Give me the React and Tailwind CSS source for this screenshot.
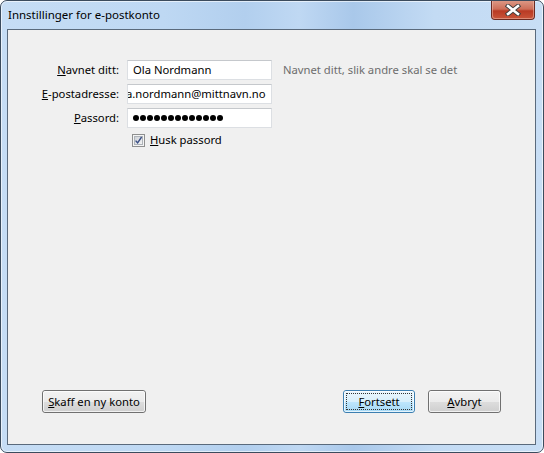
import React from "react";

const font = { fontFamily: '"Noto Sans", "Open Sans", sans-serif' };

function WinButton({ children, def, className = "" }) {
  return (
    <div
      className={
        "relative h-[23px] rounded-[3px] border flex items-center justify-center text-[11.25px] text-black " +
        (def
          ? "border-[#3c7fb1] bg-[linear-gradient(180deg,#eaf6fd_0%,#d9f0fc_50%,#bee6fd_51%,#a7d9f5_100%)] "
          : "border-[#707070] bg-[linear-gradient(180deg,#f2f2f2_0%,#ebebeb_50%,#dddddd_51%,#cfcfcf_100%)] ") +
        className
      }
    >
      <div className="absolute inset-0 rounded-[2px] border border-white/70 pointer-events-none" />
      {def && (
        <div className="absolute inset-[2px] border border-dotted border-[#333] pointer-events-none" />
      )}
      <span className="relative leading-none">{children}</span>
    </div>
  );
}

function Checkbox() {
  return (
    <svg width="13" height="13" viewBox="0 0 13 13">
      <rect x="0.5" y="0.5" width="12" height="12" fill="#f4f4f4" stroke="#8e8f8f" />
      <defs>
        <linearGradient id="cb" x1="0" y1="0" x2="1" y2="1">
          <stop offset="0" stopColor="#cbcfd5" />
          <stop offset="1" stopColor="#f6f6f6" />
        </linearGradient>
      </defs>
      <rect x="2.5" y="2.5" width="8" height="8" fill="url(#cb)" stroke="#aeb3b9" />
      <path d="M3.6 6.6 L5.6 8.8 L9.6 3" fill="none" stroke="#3a4f86" strokeWidth="1.4" />
    </svg>
  );
}

function CloseButton() {
  return (
    <div className="relative w-[44px] h-[19px] rounded-b-[4px] border border-t-0 border-[#6b2a22] bg-[linear-gradient(180deg,#dc9784_0%,#cd6e58_45%,#b93a24_55%,#c9553a_100%)] flex items-center justify-center">
      <div className="absolute inset-0 rounded-b-[3px] border border-t-0 border-[#f1c3b6]/50 pointer-events-none" />
      <svg width="16" height="12" viewBox="0 0 16 12" className="relative">
        <path d="M3 2 L13 10 M13 2 L3 10" stroke="#3d3d3d" strokeWidth="4.4" strokeLinecap="square" />
        <path d="M3 2 L13 10 M13 2 L3 10" stroke="#ffffff" strokeWidth="2.6" strokeLinecap="square" />
      </svg>
    </div>
  );
}

export default function App() {
  return (
    <div className="w-[544px] h-[453px] bg-white" style={font}>
      <div className="relative w-full h-full rounded-[7px] border border-[#3b4b5d] flex flex-col overflow-hidden bg-[linear-gradient(90deg,#c6ddf5_0%,#bed8f3_30%,#b2cfee_45%,#bfd8f3_55%,#a9c8ea_65%,#c3dbf4_80%,#c8def5_100%)]">
        <div className="absolute inset-0 rounded-[6px] border border-white/60 pointer-events-none" />
        <div className="relative h-[28px] flex items-start">
          <div className="flex-1 h-full flex items-center pl-[7px] pb-[1px] text-[11.5px] text-black">
            Innstillinger for e-postkonto
          </div>
          <div className="mr-[8px]">
            <CloseButton />
          </div>
        </div>
        <div className="relative ml-[6px] mr-[7px] mb-[7px] flex-1 border border-[#5a6a7c] bg-[#f0f0f0] flex flex-col text-[11.25px] text-black">
          <div className="mt-[30px] grid grid-cols-[111px_145px_1fr] gap-x-[8px] gap-y-[4px] items-center">
            <div className="text-right">
              <u>N</u>avnet ditt:
            </div>
            <div className="h-[20px] border border-[#dcdfe3] border-t-[#c5c8cc] bg-white flex items-center pl-[5px] whitespace-nowrap overflow-hidden">
              Ola Nordmann
            </div>
            <div className="pl-[3px] text-[#6d6d6d] whitespace-nowrap">
              Navnet ditt, slik andre skal se det
            </div>

            <div className="text-right">
              <u>E</u>-postadresse:
            </div>
            <div className="h-[20px] border border-[#dcdfe3] border-t-[#c5c8cc] bg-white flex items-center whitespace-nowrap overflow-hidden">
              <span className="-ml-[2px]">a.nordmann@mittnavn.no</span>
            </div>
            <div />

            <div className="text-right">
              <u>P</u>assord:
            </div>
            <div className="h-[20px] border border-[#dcdfe3] border-t-[#c5c8cc] bg-white flex items-center pl-[5px] gap-[1px]">
              {Array.from({ length: 13 }).map((_, i) => (
                <span key={i} className="w-[6px] h-[6px] rounded-full bg-black" />
              ))}
            </div>
            <div />

            <div />
            <div className="col-span-2 h-[16px] flex items-center pl-[5px] gap-[5px]">
              <Checkbox />
              <span>
                <u>H</u>usk passord
              </span>
            </div>
          </div>

          <div className="mt-auto mb-[31px] px-[34px] flex items-center">
            <WinButton className="w-[104px]">
              <u>S</u>kaff en ny konto
            </WinButton>
            <div className="flex-1" />
            <WinButton def className="w-[72px]">
              <u>F</u>ortsett
            </WinButton>
            <WinButton className="w-[73px] ml-[13px]">
              <u>A</u>vbryt
            </WinButton>
          </div>
        </div>
      </div>
    </div>
  );
}
